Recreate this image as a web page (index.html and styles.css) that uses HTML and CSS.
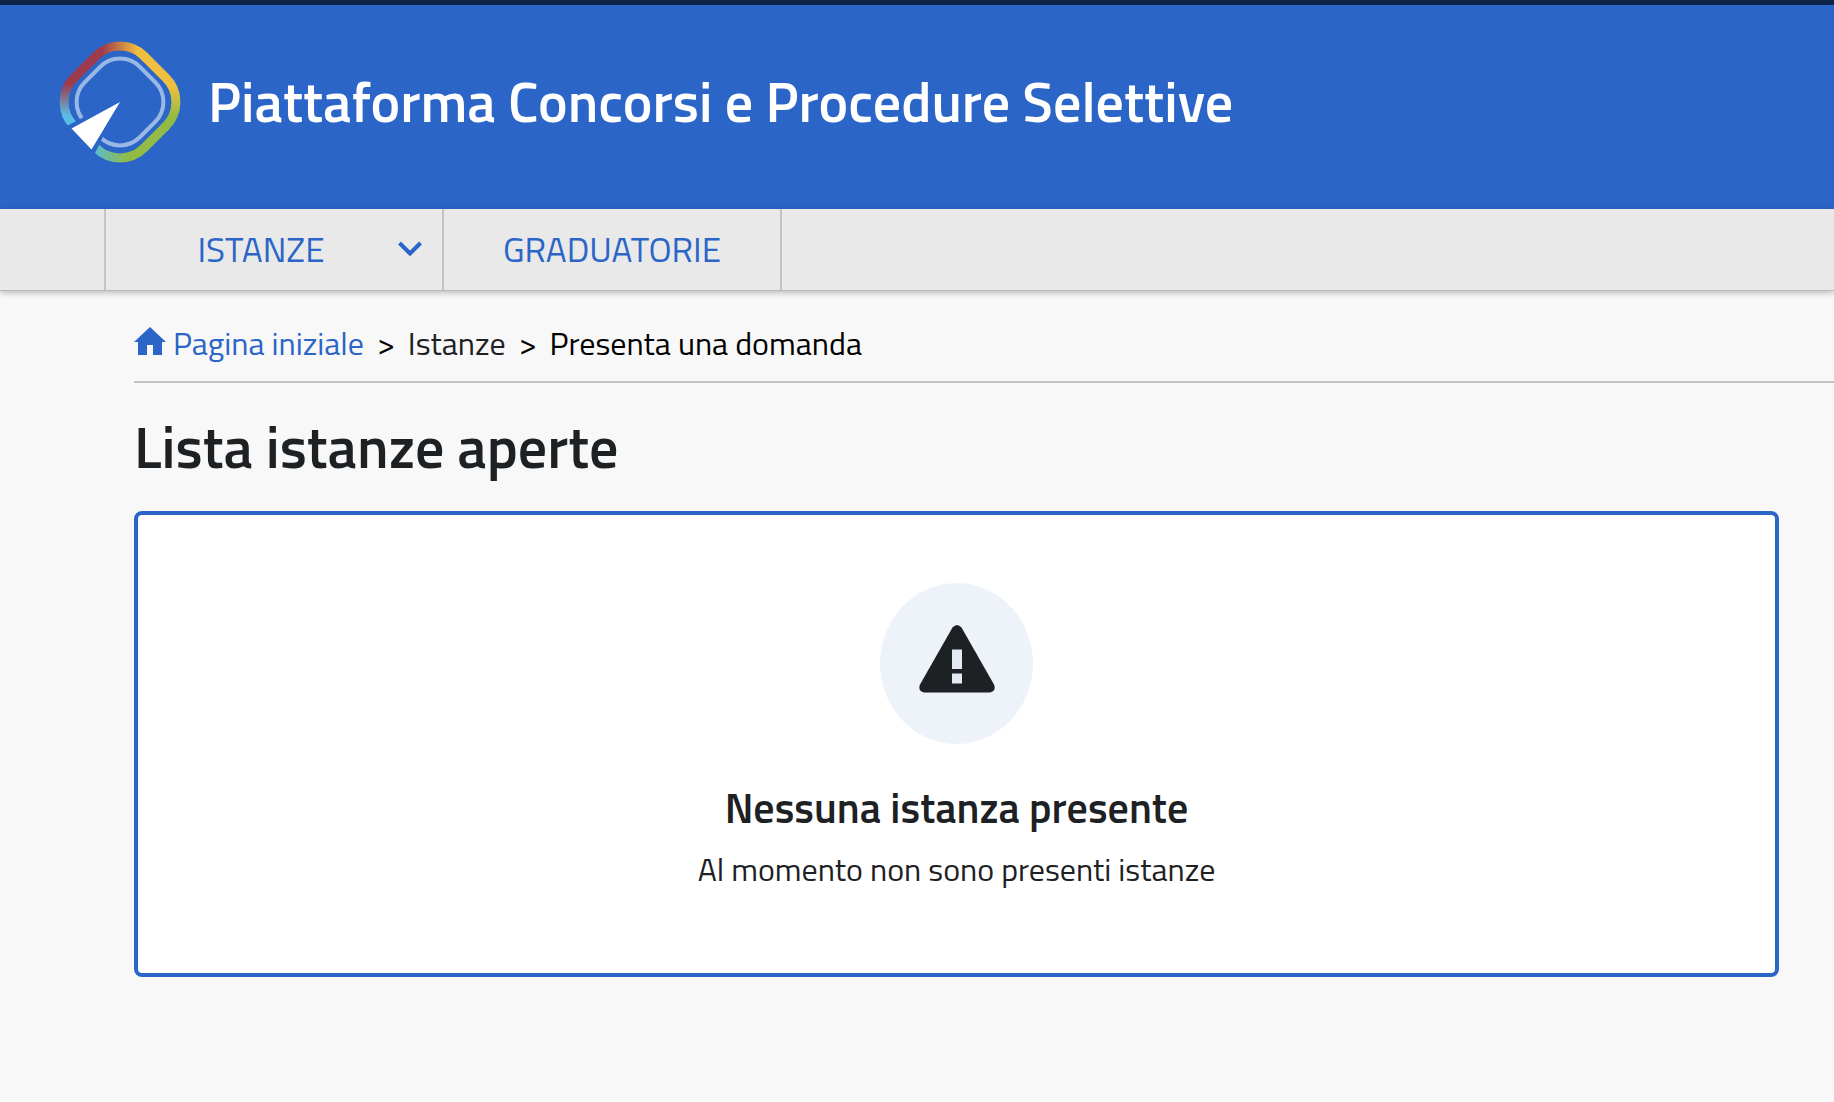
FILE: index.html
```html
<!DOCTYPE html>
<html lang="it">
<head>
  <meta charset="UTF-8">
  <meta name="viewport" content="width=device-width, initial-scale=1.0">
  <title>Piattaforma Concorsi e Procedure Selettive</title>
  <link rel="stylesheet" href="styles.css">
</head>
<body>
  <header class="header">
    <svg class="logo" viewBox="18 20 124 124" aria-hidden="true">
      <defs>
        <linearGradient id="red-yellow" gradientUnits="userSpaceOnUse" x1="62" y1="0" x2="98" y2="0">
          <stop offset="0" stop-color="#9d3a4c"/>
          <stop offset="1" stop-color="#f1bf3f"/>
        </linearGradient>
        <linearGradient id="yellow-green" gradientUnits="userSpaceOnUse" x1="0" y1="66" x2="0" y2="98">
          <stop offset="0" stop-color="#f1bf3f"/>
          <stop offset="1" stop-color="#91bb45"/>
        </linearGradient>
        <linearGradient id="green-cyan" gradientUnits="userSpaceOnUse" x1="88" y1="0" x2="56" y2="0">
          <stop offset="0" stop-color="#91bb45"/>
          <stop offset="1" stop-color="#5cbcc9"/>
        </linearGradient>
        <linearGradient id="cyan-red" gradientUnits="userSpaceOnUse" x1="0" y1="96" x2="0" y2="64">
          <stop offset="0" stop-color="#59bde8"/>
          <stop offset="1" stop-color="#9d3a4c"/>
        </linearGradient>
        <mask id="gap" maskUnits="userSpaceOnUse" x="0" y="0" width="160" height="160">
          <rect width="160" height="160" fill="#fff"/>
          <path d="M76 80 44 97 15 112 45 153 55 133 63 117 78 88Z" fill="#000"/>
        </mask>
      </defs>
      <g mask="url(#gap)" fill="none">
        <g stroke-width="9">
          <path d="M34 106A34 34 0 0 1 34 58L36 56" stroke="url(#cyan-red)"/>
          <path d="M34 58 56 36A34 34 0 0 1 104 36L106 38" stroke="url(#red-yellow)"/>
          <path d="M104 36 126 58A34 34 0 0 1 126 106L124 108" stroke="url(#yellow-green)"/>
          <path d="M126 106 104 128A34 34 0 0 1 56 128L50 122" stroke="url(#green-cyan)"/>
        </g>
        <path d="M60 47A28 28 0 0 1 100 47L115 62A28 28 0 0 1 115 102L100 117A28 28 0 0 1 60 117L45 102A28 28 0 0 1 45 62Z" stroke="#9ab8e6" stroke-width="4"/>
      </g>
      <path d="M80 82 31.500 108.500 51.500 129.500Z" fill="#fff"/>
    </svg>
    <span class="site-title">Piattaforma Concorsi e Procedure Selettive</span>
  </header>

  <nav class="menu">
    <button type="button" class="menu-item has-submenu">
      <span>ISTANZE</span>
      <svg class="chevron" viewBox="0 0 24 16" aria-hidden="true">
        <path d="M1.500 2 12 12.500 22.500 2" fill="none" stroke="currentColor" stroke-width="4"/>
      </svg>
    </button>
    <a href="#" class="menu-item">GRADUATORIE</a>
  </nav>

  <main class="content">
    <nav class="breadcrumb">
      <a href="#" class="home">
        <svg class="home-icon" viewBox="0 0 32 28" aria-hidden="true">
          <path d="M16 0 32 15H28V28H19V18H13V28H4V15H0Z" fill="currentColor"/>
        </svg>
        Pagina iniziale
      </a>
      <span>&gt;</span>
      <span class="parent">Istanze</span>
      <span>&gt;</span>
      <span>Presenta una domanda</span>
    </nav>

    <h1>Lista istanze aperte</h1>

    <section class="empty-box">
      <div class="empty-icon">
        <svg viewBox="0 0 76 68" aria-hidden="true">
          <path d="M33.500 2.500Q38-2.500 42.500 2.500L75 59.500Q77.500 66 71 67.500H5Q-1.500 66 1 59.500Z" fill="#1d2124"/>
          <path d="M33 24.500H43V44H33ZM33 48.500H43V58.500H33Z" fill="#e4eaf3"/>
        </svg>
      </div>
      <h2>Nessuna istanza presente</h2>
      <p>Al momento non sono presenti istanze</p>
    </section>
  </main>
</body>
</html>
```
FILE: styles.css
```css
body {
  margin: 0;
  font-family: 'Titillium Web', Roboto, sans-serif;
  font-size: 32px;
  line-height: 40px;
  color: #1d2124;
  background-color: #f8f8f8;
}
a {
  color: #2a65c7;
  text-decoration: none;
}
.header {
  display: flex;
  align-items: center;
  gap: 26px;
  padding: 35px 58px 45px;
  border-top: 5px solid #0b2447;
  background-color: #2a65c7;
}
.logo {
  width: 124px;
  height: 124px;
}
.site-title {
  font-size: 56px;
  line-height: 64px;
  font-weight: 600;
  color: white;
}
.menu {
  display: flex;
  padding-left: 104px;
  background-color: #e9e9e9;
  border-bottom: 1px solid #b9b9b9;
  box-shadow: 0 2px 6px rgba(0, 0, 0, 0.25);
}
.menu-item {
  box-sizing: border-box;
  width: 338px;
  height: 81px;
  padding: 0;
  border: 0 solid #c5c5be;
  border-right-width: 2px;
  background: none;
  color: #2a65c7;
  font-family: inherit;
  font-size: 35px;
  line-height: 80px;
  text-align: center;
  cursor: pointer;
}
.menu-item:first-child {
  width: 340px;
  border-left-width: 2px;
}
.has-submenu {
  display: grid;
  grid-template-columns: 1fr 24px;
  align-items: center;
  padding: 0 20px 1px 18px;
}
.chevron {
  width: 24px;
  height: 16px;
}
.content {
  padding: 32px 0 40px 134px;
}
.breadcrumb {
  display: flex;
  gap: 13px;
  padding-bottom: 18px;
  border-bottom: 2px solid #c4c4c4;
  color: black;
}
.home {
  display: flex;
  gap: 7px;
}
.home-icon {
  width: 32px;
  height: 28px;
  margin-top: 4px;
}
.parent {
  color: #1d2124;
}
h1 {
  margin: 32px 0;
  font-size: 58px;
  line-height: 64px;
  font-weight: 600;
}
.empty-box {
  display: flex;
  flex-direction: column;
  align-items: center;
  margin-right: 55px;
  padding: 68px 24px 84px;
  border: 4px solid #2a65c7;
  border-radius: 8px;
  background-color: white;
  text-align: center;
}
.empty-icon {
  display: flex;
  align-items: center;
  justify-content: center;
  width: 153px;
  height: 161px;
  border-radius: 50%;
  background-color: #eef3fa;
}
.empty-icon svg {
  width: 76px;
  height: 68px;
  margin-bottom: 10px;
}
h2 {
  margin: 39px 0 18px;
  font-size: 42px;
  line-height: 48px;
  font-weight: 600;
}
p {
  margin: 0;
}
```
